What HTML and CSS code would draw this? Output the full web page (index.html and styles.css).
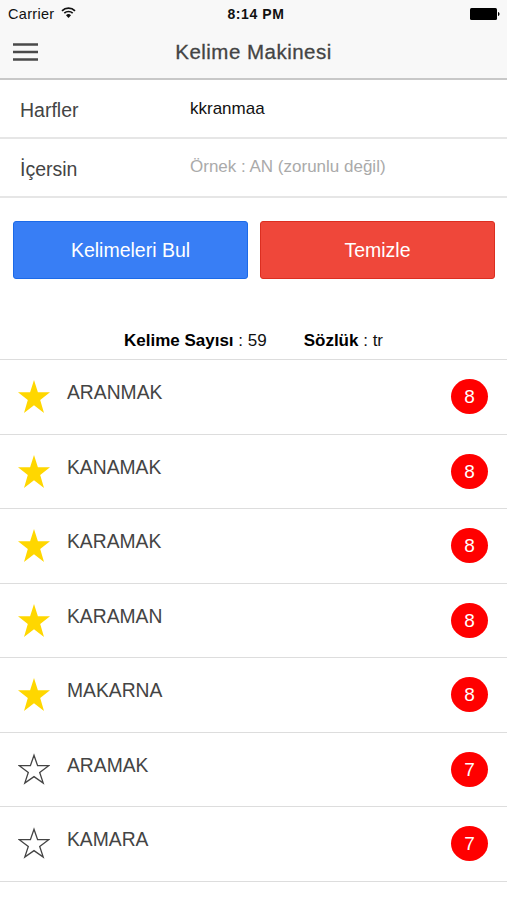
FILE: index.html
```html
<!DOCTYPE html>
<html lang="tr">
<head>
<meta charset="UTF-8">
<meta name="viewport" content="width=device-width, initial-scale=1.0">
<title>Kelime Makinesi</title>
<link rel="stylesheet" href="styles.css">
</head>
<body>
<svg class="defs" width="0" height="0">
    <symbol id="star" viewBox="0 0 32 33">
        <path d="M16 0l3.9 12.2H32l-9.8 7.7L26 33l-10-7.8L6 33l3.8-13.1L0 12.2h12.1z"/>
    </symbol>
    <symbol id="star-outline" viewBox="0 0 32 33">
        <path d="M16 2.2l3.6 10.5h11.1l-9 6.7 3.5 10.7-9.2-6.5-9.2 6.5 3.5-10.7-9-6.7h11.1z"/>
    </symbol>
</svg>

<header class="header">
    <div class="status-bar">
        <div class="carrier">
            <span>Carrier</span>
            <svg class="wifi" viewBox="0 0 15 11">
                <path d="M1 3.8a9.3 9.3 0 0 1 13 0M3.3 6.2a6 6 0 0 1 8.4 0" fill="none" stroke="#111" stroke-width="1.7"/>
                <path d="M5 8.2a3.6 3.6 0 0 1 5 0L7.5 11z" fill="#111"/>
            </svg>
        </div>
        <span class="clock">8:14 PM</span>
        <svg class="battery" viewBox="0 0 30 12">
            <rect x="0" y="0" width="27" height="12" rx="1.5"/>
            <path d="M28 4c2 .5 2 3.5 0 4z"/>
        </svg>
    </div>
    <div class="nav-bar">
        <button class="menu-btn" type="button" aria-label="Menü">
            <svg viewBox="0 0 25 18">
                <path d="M0 1.5h25M0 9h25M0 16.5h25"/>
            </svg>
        </button>
        <h1 class="title">Kelime Makinesi</h1>
    </div>
</header>

<form class="search-form">
    <div class="field">
        <label for="letters">Harfler</label>
        <input type="text" id="letters" value="kkranmaa">
    </div>
    <div class="field">
        <label for="contains">İçersin</label>
        <input type="text" id="contains" placeholder="Örnek : AN (zorunlu değil)">
    </div>
    <div class="buttons">
        <button type="button" class="btn btn-find">Kelimeleri Bul</button>
        <button type="button" class="btn btn-clear">Temizle</button>
    </div>
</form>

<div class="summary">
    <span class="count"><b>Kelime Sayısı</b> : 59</span>
    <span class="dict"><b>Sözlük</b> : tr</span>
</div>

<ul class="word-list">
    <li class="word">
        <svg class="star full"><use href="#star"/></svg>
        <span class="text">ARANMAK</span>
        <span class="badge">8</span>
    </li>
    <li class="word">
        <svg class="star full"><use href="#star"/></svg>
        <span class="text">KANAMAK</span>
        <span class="badge">8</span>
    </li>
    <li class="word">
        <svg class="star full"><use href="#star"/></svg>
        <span class="text">KARAMAK</span>
        <span class="badge">8</span>
    </li>
    <li class="word">
        <svg class="star full"><use href="#star"/></svg>
        <span class="text">KARAMAN</span>
        <span class="badge">8</span>
    </li>
    <li class="word">
        <svg class="star full"><use href="#star"/></svg>
        <span class="text">MAKARNA</span>
        <span class="badge">8</span>
    </li>
    <li class="word">
        <svg class="star empty"><use href="#star-outline"/></svg>
        <span class="text">ARAMAK</span>
        <span class="badge">7</span>
    </li>
    <li class="word">
        <svg class="star empty"><use href="#star-outline"/></svg>
        <span class="text">KAMARA</span>
        <span class="badge">7</span>
    </li>
</ul>
</body>
</html>
```
FILE: styles.css
```css
* {
    box-sizing: border-box;
}
body {
    margin: 0;
    height: 900px;
    overflow: hidden;
    background-color: #fff;
    color: #444;
    font-family: "Liberation Sans", Arial, sans-serif;
    font-size: 19.5px;
}
.defs {
    display: block;
}

/* header */
.header {
    height: 80px;
    background-color: #f8f8f8;
    border-bottom: 2px solid #c8c8c8;
}
.status-bar {
    display: grid;
    grid-template-columns: 1fr auto 1fr;
    align-items: center;
    height: 27px;
    padding: 0 7px 0 8px;
    color: #111;
    font-size: 14.5px;
}
.carrier {
    display: flex;
    align-items: center;
    gap: 7px;
    letter-spacing: 0.3px;
}
.wifi {
    width: 15px;
    height: 11px;
    margin-top: -2px;
}
.clock {
    font-size: 14px;
    font-weight: bold;
    letter-spacing: 0.6px;
    padding-left: 4px;
}
.battery {
    justify-self: end;
    width: 30px;
    height: 12px;
}
.nav-bar {
    display: grid;
    grid-template-columns: 38px 1fr 38px;
    align-items: center;
    height: 50px;
}
.menu-btn {
    padding: 0 0 0 13px;
    border: none;
    background: none;
}
.menu-btn svg {
    display: block;
    width: 25px;
    height: 18px;
    stroke: #4a4a4a;
    stroke-width: 2.6;
}
.title {
    margin: 0;
    text-align: center;
    font-size: 20.5px;
    font-weight: normal;
    letter-spacing: 0.48px;
    -webkit-text-stroke: 0.3px #444;
}

/* form */
.field {
    display: flex;
    height: 59px;
    padding-left: 20px;
    border-bottom: 2px solid #e6e6e6;
}
.field label {
    width: 170px;
    line-height: 61px;
}
.field input {
    width: 280px;
    height: 56px;
    padding: 0;
    border: none;
    outline: none;
    background: none;
    color: #111;
    font-family: inherit;
    font-size: 17px;
}
#letters {
    height: 58px;
}
.field input::placeholder {
    color: #aaa;
}
.buttons {
    display: flex;
    gap: 12px;
    padding: 23px 12px 0 13px;
}
.btn {
    flex: 1;
    height: 58px;
    border: 1px solid;
    border-radius: 3px;
    color: #fff;
    font-family: inherit;
    font-size: 19.5px;
    padding: 1px 0 0;
}
.btn-find {
    background-color: #387ef5;
    border-color: #1c6ae8;
}
.btn-clear {
    background-color: #ef473a;
    border-color: #dc2e20;
}

/* result summary */
.summary {
    display: flex;
    justify-content: center;
    gap: 37px;
    height: 80px;
    padding-top: 52px;
    color: #111;
    font-size: 17px;
    line-height: 20px;
}
.summary b {
    color: #000;
}

/* words */
.word-list {
    margin: 0;
    padding: 0;
    list-style: none;
    border-top: 1px solid #ddd;
}
.word {
    display: flex;
    height: 74.5px;
    padding: 0 19px 0 18px;
    border-bottom: 1px solid #ddd;
}
.star {
    width: 32px;
    height: 33px;
    margin: 20px 17px 0 0;
}
.full {
    fill: #ffd700;
}
.empty {
    fill: none;
    stroke: #444;
    stroke-width: 1.3;
}
.text {
    flex: 1;
    font-size: 19.3px;
    line-height: 65px;
}
.badge {
    width: 37px;
    height: 35px;
    margin-top: 19px;
    border-radius: 50%;
    background-color: #f00;
    color: #fff;
    font-size: 19px;
    line-height: 36px;
    text-align: center;
}
```
